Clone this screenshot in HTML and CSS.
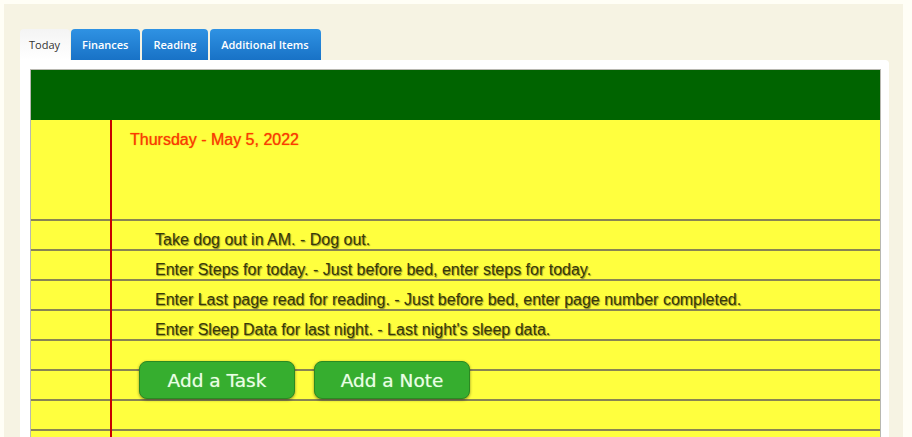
FILE: index.html
```html
<!DOCTYPE html>
<html>
<head>
<meta charset="utf-8">
<link rel="stylesheet" href="styles.css">
</head>
<body>
<div class="outer">
  <div class="tabs">
    <div class="tab active">Today</div>
    <div class="tab">Finances</div>
    <div class="tab">Reading</div>
    <div class="tab">Additional Items</div>
  </div>
  <div class="panel">
    <div class="notebook">
      <div class="header"></div>
      <div class="paper">
        <div class="date">Thursday - May 5, 2022</div>
        <div class="lines">
          <div class="task">Take dog out in AM. - Dog out.</div>
          <div class="task">Enter Steps for today. - Just before bed, enter steps for today.</div>
          <div class="task">Enter Last page read for reading. - Just before bed, enter page number completed.</div>
          <div class="task">Enter Sleep Data for last night. - Last night's sleep data.</div>
          <div class="buttons">
            <button class="btn">Add a Task</button>
            <button class="btn">Add a Note</button>
          </div>
        </div>
      </div>
    </div>
  </div>
</div>
</body>
</html>
```
FILE: styles.css
```css
html, body {
  margin: 0;
  padding: 0;
  background: #fffef6;
  height: 100%;
  overflow: hidden;
}
.outer {
  margin: 4px 9px 0 4px;
  padding: 25px 14px 0 16px;
  background: #f6f3e3;
  min-height: 500px;
}
.tabs {
  display: flex;
  gap: 2px;
  height: 31px;
  align-items: flex-end;
}
.tab {
  height: 31px;
  box-sizing: border-box;
  padding: 0 12px 0 11px;
  line-height: 31px;
  font-family: "Open Sans", "DejaVu Sans", sans-serif;
  font-size: 11px;
  font-weight: 600;
  color: #fff;
  background: linear-gradient(to bottom, #2f92e3, #1872c6);
  border-radius: 4px 4px 0 0;
}
.tab.active {
  background: linear-gradient(to bottom, #f4f4f4, #fff);
  color: #333;
  font-weight: 400;
  padding: 0 10px 0 9px;
  margin-right: -1px;
}
.panel {
  background: #fff;
  padding: 9px 8px 0 10px;
  border-radius: 0 4px 0 0;
}
.notebook {
  border: 1px solid #b8b8b0;
  border-bottom: none;
}
.header {
  height: 50px;
  background: #006400;
}
.paper {
  position: relative;
  background: #ffff3e;
  height: 400px;
}
.paper::after {
  content: "";
  position: absolute;
  left: 79px;
  top: 0;
  bottom: 0;
  width: 2px;
  background: #c80000;
}
.date {
  height: 99px;
  box-sizing: border-box;
  padding: 11px 0 0 99px;
  font-family: "Liberation Sans", Arial, sans-serif;
  font-size: 16px;
  line-height: 18px;
  color: #ff3a00;
  text-shadow: 0 0 1px rgba(200, 40, 0, 0.7);
}
.lines {
  background: repeating-linear-gradient(to bottom, #8a8552 0, #8a8552 2px, transparent 2px, transparent 30px);
  min-height: 301px;
}
.task {
  height: 30px;
  box-sizing: border-box;
  padding: 12px 0 0 124px;
  font-family: "Liberation Sans", Arial, sans-serif;
  font-size: 16px;
  line-height: 18px;
  color: #38380a;
  text-shadow: 1px 1px 1px rgba(50, 50, 0, 0.55);
}
.buttons {
  display: flex;
  gap: 19px;
  padding: 22px 0 0 108px;
}
.btn {
  width: 156px;
  height: 38px;
  box-sizing: border-box;
  border: 1px solid #2b8a22;
  border-radius: 8px;
  background: #36ae2f;
  box-shadow: 0 1px 3px rgba(0, 0, 0, 0.45);
  color: #eaffe4;
  font-family: "DejaVu Sans", Verdana, sans-serif;
  font-size: 18.5px;
  padding: 0;
  line-height: 37px;
  text-shadow: 0 0 1px rgba(255, 255, 255, 0.5);
  cursor: pointer;
}
```
